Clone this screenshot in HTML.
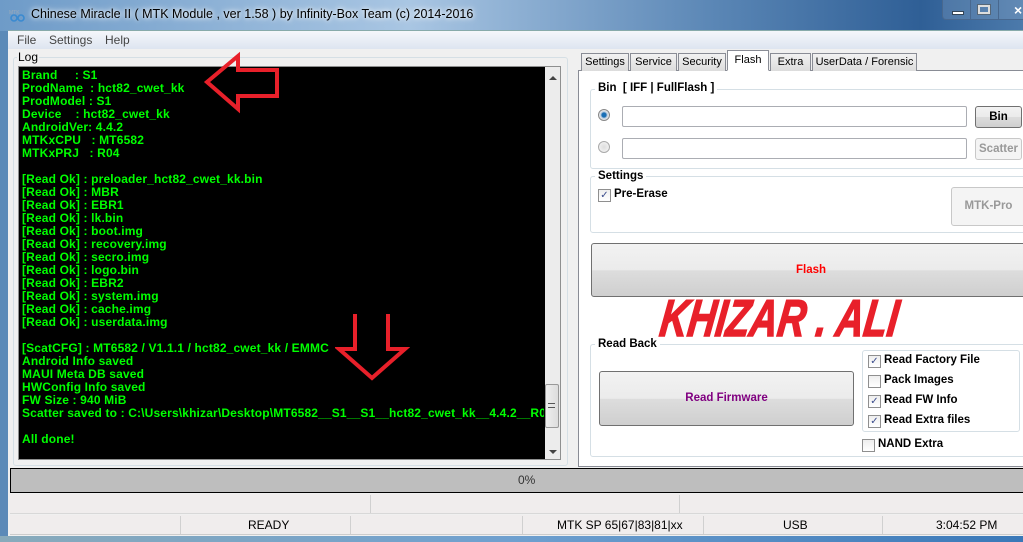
<!DOCTYPE html>
<html><head><meta charset="utf-8"><style>
*{margin:0;padding:0;box-sizing:border-box}
body{width:1023px;height:542px;overflow:hidden;position:relative;font-family:"Liberation Sans",sans-serif;font-size:12px;background:#5b8ab8}
.abs{position:absolute}
#title{left:0;top:0;width:1023px;height:31px;background:linear-gradient(90deg,#6e9bc8 0%,#a9c6e3 40%,#5a86b5 70%,#2f5f96 90%,#4c7aab 100%)}
#title span{position:absolute;left:31px;top:7px;font-size:12.5px;color:#000;text-shadow:0 0 8px #fff,0 0 4px #fff}
#client{left:8px;top:30px;width:1015px;height:506px;background:#f0f0f0;border-top:1px solid #8aa}
.log{font-family:"Liberation Sans",sans-serif;font-weight:bold;font-size:12px;line-height:13px;color:#00ff00;white-space:pre;letter-spacing:0.15px}
.tab{position:absolute;top:53px;height:18px;border:1px solid #898c95;border-bottom:none;background:linear-gradient(#f2f2f2,#dcdcdc);font-size:11px;padding:2px 0 0 0;text-align:center;color:#000;white-space:nowrap}
.grp{position:absolute;border:1px solid #d5dfe5;border-radius:3px}
.lbl{position:absolute;font-weight:bold;font-size:11.5px;background:#fff;padding:0 3px}
.inp{position:absolute;height:21px;border:1px solid #abadb3;background:#fff;border-radius:2px}
.btn{position:absolute;border:1px solid #707070;border-radius:3px;background:linear-gradient(#f2f2f2 0%,#ebebeb 50%,#dddddd 51%,#cfcfcf 100%);font-weight:bold;font-size:11.5px;text-align:center}
.cb{position:absolute;width:13px;height:13px;border:1px solid #8f8f8f;background:linear-gradient(#eee,#fff);font-size:10px;line-height:11px;text-align:center;color:#3b4c8c}
.cbl{position:absolute;font-weight:bold;font-size:11.5px}
.sep{position:absolute;width:1px;background:#d0d0d0}
</style></head><body>
<div id="title" class="abs">
<svg class="abs" style="left:9px;top:9px" width="18" height="14"><text x="0" y="5" font-size="5" fill="#9ab">MTK</text><circle cx="5" cy="9" r="3" fill="none" stroke="#3a8ad0" stroke-width="1.6"/><circle cx="12" cy="9" r="3" fill="none" stroke="#3a8ad0" stroke-width="1.6"/></svg>
<span>Chinese Miracle II ( MTK Module , ver 1.58 ) by Infinity-Box Team (c) 2014-2016</span>
<div class="abs" style="left:942px;top:0;width:90px;height:20px;border:1px solid #48688f;border-top:none;border-radius:0 0 4px 4px;background:rgba(255,255,255,.12)"></div>
<div class="abs" style="left:970px;top:0;width:1px;height:20px;background:#48688f"></div>
<div class="abs" style="left:998px;top:0;width:1px;height:20px;background:#48688f"></div>
<div class="abs" style="left:952px;top:11px;width:12px;height:4px;background:#fff;border:1px solid #345"></div>
<div class="abs" style="left:978px;top:5px;width:12px;height:9px;border:2px solid #ddd;outline:1px solid #567"></div>
<div class="abs" style="left:1014px;top:2px;color:#fff;font-weight:bold;font-size:14px">×</div>
</div>
<div id="client" class="abs"></div>
<div class="abs" style="left:8px;top:31px;width:1015px;height:18px;background:linear-gradient(#f5f7fb,#dde5f0)"></div>
<div class="abs" style="left:17px;top:33px;color:#444;font-size:12px">File</div>
<div class="abs" style="left:49px;top:33px;color:#444;font-size:12px">Settings</div>
<div class="abs" style="left:105px;top:33px;color:#444;font-size:12px">Help</div>
<div class="abs" style="left:13px;top:57px;width:555px;height:409px;border:1px solid #d5dfe5;border-radius:3px"></div>
<div class="abs" style="left:17px;top:50px;background:#f0f0f0;padding:0 1px;font-size:12px">Log</div>
<div class="abs" style="left:18px;top:66px;width:543px;height:394px;border:1px solid #8e8f8f;background:#000"></div>
<div class="abs log" style="left:22px;top:69px;width:522px;overflow:hidden">Brand     : S1
ProdName  : hct82_cwet_kk
ProdModel : S1
Device    : hct82_cwet_kk
AndroidVer: 4.4.2
MTKxCPU   : MT6582
MTKxPRJ   : R04

[Read Ok] : preloader_hct82_cwet_kk.bin
[Read Ok] : MBR
[Read Ok] : EBR1
[Read Ok] : lk.bin
[Read Ok] : boot.img
[Read Ok] : recovery.img
[Read Ok] : secro.img
[Read Ok] : logo.bin
[Read Ok] : EBR2
[Read Ok] : system.img
[Read Ok] : cache.img
[Read Ok] : userdata.img

[ScatCFG] : MT6582 / V1.1.1 / hct82_cwet_kk / EMMC
Android Info saved
MAUI Meta DB saved
HWConfig Info saved
FW Size : 940 MiB
Scatter saved to : C:\Users\khizar\Desktop\MT6582__S1__S1__hct82_cwet_kk__4.4.2__R04

All done!</div>
<div class="abs" style="left:544px;top:67px;width:16px;height:392px;background:#ececec;border-left:1px solid #000"></div>
<div class="abs" style="left:545px;top:384px;width:14px;height:44px;border:1px solid #999;border-radius:2px;background:linear-gradient(90deg,#eee,#ddd)"></div>
<div class="abs" style="left:548px;top:403px;width:7px;height:5px;border-top:1px solid #555;border-bottom:1px solid #555"></div>
<div class="abs" style="left:549px;top:76px;border:4px solid transparent;border-bottom:4px solid #444;border-top:none"></div>
<div class="abs" style="left:549px;top:450px;border:4px solid transparent;border-top:4px solid #444;border-bottom:none"></div>
<svg class="abs" style="left:195px;top:50px" width="90" height="65"><path d="M12 32 L43 6 L43 20 L82 20 L82 46 L43 46 L43 59 Z" fill="none" stroke="#e8202a" stroke-width="4" stroke-linejoin="miter"/></svg>
<svg class="abs" style="left:335px;top:312px" width="75" height="70"><path d="M20 2 L20 37 L4 37 L37 66 L70 37 L53 37 L53 2" fill="none" stroke="#e8202a" stroke-width="4"/></svg>
<!-- right panel -->
<div class="abs" style="left:578px;top:70px;width:445px;height:397px;background:#fff;border:1px solid #898c95;border-right:none"></div>
<div class="tab" style="left:581px;width:48px">Settings</div>
<div class="tab" style="left:630px;width:47px">Service</div>
<div class="tab" style="left:678px;width:48px">Security</div>
<div class="tab" style="left:727px;top:50px;height:21px;width:42px;background:#fff;border-bottom:1px solid #fff;padding-top:3px">Flash</div>
<div class="tab" style="left:770px;width:41px">Extra</div>
<div class="tab" style="left:812px;width:105px">UserData / Forensic</div>
<div class="grp" style="left:590px;top:89px;width:440px;height:80px"></div>
<div class="lbl" style="left:595px;top:82px">Bin&nbsp; [ IFF | FullFlash ]</div>
<div class="abs" style="left:598px;top:109px;width:12px;height:12px;border-radius:50%;border:1px solid #888;background:radial-gradient(#1a6fb5 30%,#bcd 45%,#eee 70%)"></div>
<div class="abs" style="left:598px;top:141px;width:12px;height:12px;border-radius:50%;border:1px solid #aaa;background:radial-gradient(#ddd,#f8f8f8)"></div>
<div class="inp" style="left:622px;top:106px;width:345px"></div>
<div class="inp" style="left:622px;top:138px;width:345px"></div>
<div class="btn" style="left:975px;top:106px;width:47px;height:22px;line-height:20px">Bin</div>
<div class="btn" style="left:975px;top:138px;width:47px;height:22px;line-height:20px;color:#999;border-color:#c8c8c8;background:#f4f4f4">Scatter</div>
<div class="grp" style="left:590px;top:176px;width:440px;height:57px"></div>
<div class="lbl" style="left:595px;top:170px">Settings</div>
<div class="cb" style="left:598px;top:189px">✓</div>
<div class="cbl" style="left:614px;top:188px">Pre-Erase</div>
<div class="btn" style="left:951px;top:187px;width:75px;height:39px;line-height:37px;color:#999;border-color:#c8c8c8;background:#f4f4f4">MTK-Pro</div>
<div class="btn" style="left:591px;top:243px;width:440px;height:54px;line-height:52px;color:#ff0000">Flash</div>
<div class="abs" style="left:664px;top:293px;font-family:'Liberation Sans',sans-serif;font-weight:bold;font-style:italic;font-size:52px;color:#e8202a;-webkit-text-stroke:1.5px #e8202a;transform:scaleX(0.74) skewX(-10deg);transform-origin:0 0;line-height:52px;white-space:nowrap">KHIZAR . ALI</div>
<div class="grp" style="left:590px;top:344px;width:440px;height:113px"></div>
<div class="lbl" style="left:595px;top:338px">Read Back</div>
<div class="btn" style="left:599px;top:371px;width:255px;height:55px;line-height:53px;color:#800080">Read Firmware</div>
<div class="grp" style="left:862px;top:350px;width:158px;height:82px"></div>
<div class="cb" style="left:868px;top:355px">✓</div><div class="cbl" style="left:884px;top:354px">Read Factory File</div>
<div class="cb" style="left:868px;top:375px"></div><div class="cbl" style="left:884px;top:374px">Pack Images</div>
<div class="cb" style="left:868px;top:395px">✓</div><div class="cbl" style="left:884px;top:394px">Read FW Info</div>
<div class="cb" style="left:868px;top:415px">✓</div><div class="cbl" style="left:884px;top:414px">Read Extra files</div>
<div class="cb" style="left:862px;top:439px"></div><div class="cbl" style="left:878px;top:438px">NAND Extra</div>
<!-- progress -->
<div class="abs" style="left:10px;top:468px;width:1013px;height:25px;background:#bebebe;border:1px solid #000;border-right:none"></div>
<div class="abs" style="left:518px;top:473px;font-size:12px;color:#333">0%</div>
<div class="abs" style="left:10px;top:494px;width:1013px;height:20px;background:#f0eded;border-bottom:1px solid #d8d8d8"></div>
<div class="sep" style="left:370px;top:495px;height:18px"></div>
<div class="sep" style="left:679px;top:495px;height:18px"></div>
<div class="abs" style="left:10px;top:515px;width:1013px;height:20px;background:#f0eded;border-bottom:1px solid #ccc"></div>
<div class="sep" style="left:180px;top:516px;height:18px"></div>
<div class="sep" style="left:350px;top:516px;height:18px"></div>
<div class="sep" style="left:522px;top:516px;height:18px"></div>
<div class="sep" style="left:703px;top:516px;height:18px"></div>
<div class="sep" style="left:882px;top:516px;height:18px"></div>
<div class="abs" style="left:248px;top:518px;font-size:12px">READY</div>
<div class="abs" style="left:557px;top:518px;font-size:12px">MTK SP 65|67|83|81|xx</div>
<div class="abs" style="left:783px;top:518px;font-size:12px">USB</div>
<div class="abs" style="left:936px;top:518px;font-size:12px">3:04:52 PM</div>
<div class="abs" style="left:0;top:536px;width:1023px;height:6px;background:linear-gradient(90deg,#8ab 0%,#6fa0cf 50%,#3a78b8 100%)"></div>
</body></html>
